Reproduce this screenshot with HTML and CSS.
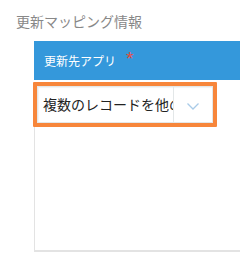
FILE: index.html
```html
<!DOCTYPE html>
<html lang="ja">
<head>
<meta charset="utf-8">
<link rel="stylesheet" href="styles.css">
</head>
<body>
<div class="title">更新マッピング情報</div>
<div class="table">
  <div class="thead">
    <span class="th-label">更新先アプリ</span><span class="req">*</span>
  </div>
  <div class="tbody">
    <div class="focus">
      <div class="select">
        <span class="select-text">複数のレコードを他のアプリへ更新</span>
        <span class="select-btn">
          <svg width="12" height="7" viewBox="0 0 12 7"><polyline points="0.5,0.5 6,6 11.5,0.5" fill="none" stroke="#a9cbe8" stroke-width="1.3"/></svg>
        </span>
      </div>
    </div>
  </div>
</div>
</body>
</html>
```
FILE: styles.css
```css
html, body {
  margin: 0;
  padding: 0;
  background: #fff;
  overflow: hidden;
  width: 240px;
  height: 266px;
}
body {
  font-family: "Noto Sans CJK JP", "Noto Sans", sans-serif;
}
.title {
  margin: 11px 0 0 16px;
  font-size: 14px;
  line-height: 20px;
  height: 20px;
  color: #888;
}
.table {
  margin: 10px 0 0 34px;
  width: 206px;
}
.thead {
  background: #3498db;
  height: 39px;
  display: flex;
  align-items: center;
  padding-left: 10px;
  color: #fff;
  font-size: 12px;
}
.th-label {
  line-height: 16px;
}
.req {
  color: #e74c3c;
  font-family: "Liberation Sans", sans-serif;
  font-size: 19px;
  margin-left: 10px;
  align-self: flex-start;
  margin-top: 8px;
  line-height: 19px;
}
.tbody {
  border-left: 1px solid #e3e3e3;
  border-bottom: 2px solid #e3e3e3;
  height: 168px;
}
.focus {
  margin: 2px 0 0 -2px;
  width: 176px;
  border: 4px solid #f7863b;
  border-radius: 1px;
}
.select {
  display: flex;
  height: 35px;
  border: 1px solid #e3e7e8;
  background: #fff;
  box-shadow: 1px 1px 1px #f3f3f3 inset;
}
.select-text {
  flex: 1;
  min-width: 0;
  overflow: hidden;
  white-space: nowrap;
  font-size: 14px;
  line-height: 35px;
  padding-left: 5px;
  color: #222;
}
.select-btn {
  width: 38px;
  border-left: 1px solid #e3e7e8;
  display: flex;
  align-items: center;
  justify-content: center;
  padding-top: 3px;
}
```
